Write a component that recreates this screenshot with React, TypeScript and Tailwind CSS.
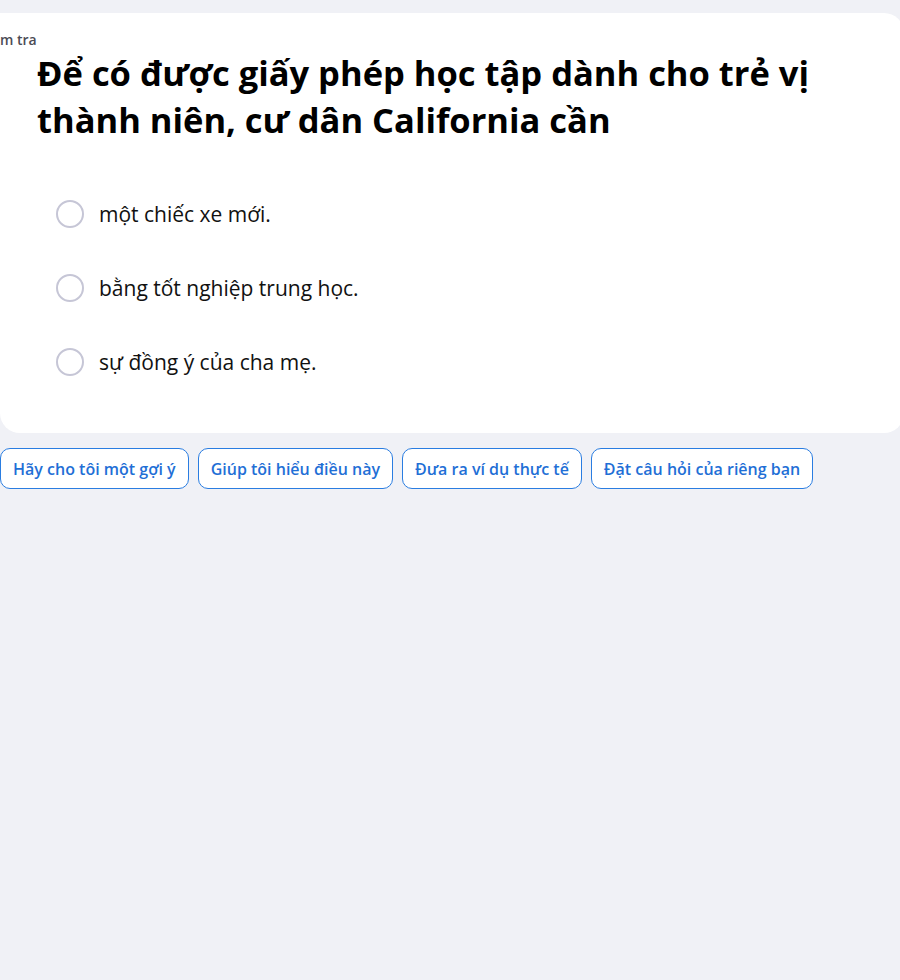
export default function App() {
  const options = ['một chiếc xe mới.', 'bằng tốt nghiệp trung học.', 'sự đồng ý của cha mẹ.'];
  const prompts = ['Hãy cho tôi một gợi ý', 'Giúp tôi hiểu điều này', 'Đưa ra ví dụ thực tế', 'Đặt câu hỏi của riêng bạn'];

  return (
    <div className="min-h-screen w-full overflow-hidden bg-[#f0f1f6] pt-[13px] font-['Open_Sans','Noto_Sans',sans-serif]">
      <div className="mr-[-4px] rounded-[20px] rounded-tl-none bg-white pb-[57px]">
        <div className="ml-[-21px] pt-[19px] text-[14px] font-semibold leading-[16px] text-[#4b4b55]">Kiểm tra</div>
        <h1 className="pl-[37px] pr-[60px] pt-[1px] text-[34.5px] font-bold leading-[47px] text-black">
          Để có được giấy phép học tập dành cho trẻ vị thành niên, cư dân California cần
        </h1>
        <div className="mt-[57px] flex flex-col gap-[46px] pl-[56px]">
          {options.map((o) => (
            <label key={o} className="flex h-[28px] items-center gap-[15px]">
              <span className="h-[28px] w-[28px] rounded-full border-2 border-[#c6c6d6] bg-white" />
              <span className="text-[21px] leading-[28px] text-[#111]">{o}</span>
            </label>
          ))}
        </div>
      </div>
      <div className="mt-[15px] flex gap-[9px]">
        {prompts.map((p) => (
          <button
            key={p}
            className="h-[41px] rounded-[10px] border border-[#2a7de1] bg-white px-[12px] text-[16px] font-semibold text-[#1f6fd6]"
          >
            {p}
          </button>
        ))}
      </div>
    </div>
  );
}
